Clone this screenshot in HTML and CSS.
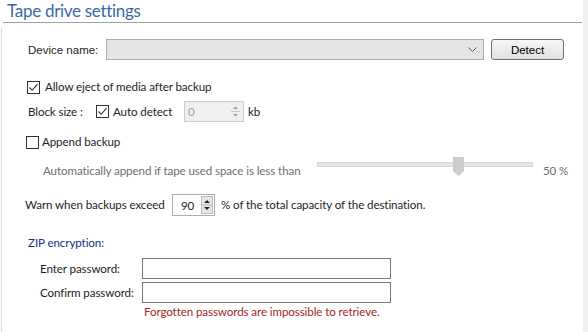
FILE: index.html
```html
<!DOCTYPE html>
<html>
<head>
<meta charset="utf-8">
<link rel="stylesheet" href="styles.css">
</head>
<body>
<div class="page">
  <div class="main">
    <div class="header"><span class="title">Tape drive settings</span></div>
    <div class="panel">
      <div class="row device-row">
        <span class="label-ms device-label">Device name:</span>
        <div class="combo">
          <svg class="chev" width="9" height="6" viewBox="0 0 9 6"><path d="M0.5 0.5 L4.5 4.5 L8.5 0.5" fill="none" stroke="#555" stroke-width="1"/></svg>
        </div>
        <div class="btn">Detect</div>
      </div>

      <div class="row eject-row">
        <span class="cb checked"><svg width="11" height="11" viewBox="0 0 11 11"><path d="M1.5 5.5 L4.2 8.3 L9.5 2.2" fill="none" stroke="#333" stroke-width="1.1"/></svg></span>
        <span class="txt">Allow eject of media after backup</span>
      </div>

      <div class="row block-row">
        <span class="txt block-label">Block size :</span>
        <span class="cb checked"><svg width="11" height="11" viewBox="0 0 11 11"><path d="M1.5 5.5 L4.2 8.3 L9.5 2.2" fill="none" stroke="#333" stroke-width="1.1"/></svg></span>
        <span class="txt auto-label">Auto detect</span>
        <div class="spin spin-disabled">
          <span class="spin-val">0</span>
          <span class="spin-btns">
            <svg width="11" height="17" viewBox="0 0 11 17"><path d="M3 6 L5.5 3.5 L8 6 Z" fill="#9a9a9a"/><line x1="1" y1="8.5" x2="10" y2="8.5" stroke="#c8c8c8"/><path d="M3 11 L5.5 13.5 L8 11 Z" fill="#9a9a9a"/></svg>
          </span>
        </div>
        <span class="txt kb">kb</span>
      </div>

      <div class="row append-row">
        <span class="cb"></span>
        <span class="txt">Append backup</span>
      </div>

      <div class="row auto-row">
        <span class="txt gray auto-text">Automatically append if tape used space is less than</span>
        <div class="slider">
          <div class="track"></div>
          <svg class="thumb" width="11" height="19" viewBox="0 0 11 19"><path d="M0 0 H11 V14 L5.5 19 L0 14 Z" fill="#cccccc"/></svg>
        </div>
        <span class="txt gray pct">50 %</span>
      </div>

      <div class="row warn-row">
        <span class="txt warn-label">Warn when backups exceed</span>
        <div class="spin spin-warn">
          <span class="spin-val">90</span>
          <span class="spin-btns">
            <svg width="12" height="18" viewBox="0 0 12 18"><rect x="0.5" y="0.5" width="11" height="17" fill="#e6e6e6" stroke="#bdbdbd"/><path d="M3 7 L6 4 L9 7 Z" fill="#222"/><line x1="1" y1="9" x2="11" y2="9" stroke="#bdbdbd"/><path d="M3 11 L6 14 L9 11 Z" fill="#222"/></svg>
          </span>
        </div>
        <span class="txt">% of the total capacity of the destination.</span>
      </div>

      <div class="row zip-row"><span class="txt navy">ZIP encryption:</span></div>

      <div class="row pwd-row">
        <span class="txt pwd-label">Enter password:</span>
        <div class="input"></div>
      </div>
      <div class="row pwd-row pwd2">
        <span class="txt pwd-label">Confirm password:</span>
        <div class="input"></div>
      </div>
      <div class="row warn-msg"><span class="txt red">Forgotten passwords are impossible to retrieve.</span></div>
    </div>
  </div>
  <div class="strip"></div>
</div>
</body>
</html>
```

FILE: styles.css
```css
html, body {
  margin: 0;
  padding: 0;
  background: #ffffff;
}
body {
  width: 588px;
  height: 332px;
  overflow: hidden;
  font-family: Lato, "Noto Sans", sans-serif;
  font-size: 11.6px;
  letter-spacing: -0.1px;
  color: #1e1e1e;
}
.page {
  display: flex;
  height: 332px;
}
.main {
  width: 583px;
  display: flex;
  flex-direction: column;
}
.strip {
  width: 5px;
  background: #f0f0f0;
}
.header {
  height: 23px;
  margin: 0 1px 0 3px;
  border-bottom: 1px solid #a0a0a0;
  box-sizing: border-box;
  padding-left: 4px;
  display: flex;
  align-items: flex-end;
}
.title {
  font-family: Lato, "Noto Sans", sans-serif;
  font-size: 17px;
  letter-spacing: -0.3px;
  color: #3b6aa8;
  line-height: 22px;
}
.panel {
  flex: 1;
  margin-top: 5px;
  margin-left: 1px;
  border-left: 1px solid #dcdcdc;
  display: flex;
  flex-direction: column;
}
.row {
  display: flex;
  align-items: center;
  white-space: nowrap;
}
.txt {
  line-height: 16px;
}
.label-ms {
  font-family: "Liberation Sans", Arial, sans-serif;
  font-size: 11.5px;
  letter-spacing: 0;
}
.device-row {
  margin-top: 11px;
  height: 21px;
  padding-left: 26px;
}
.device-label { width: 78px; }
.combo {
  width: 376px;
  height: 19px;
  border: 1px solid #adadad;
  background: #e5e5e5;
  display: flex;
  align-items: center;
  justify-content: flex-end;
}
.chev {
  margin-right: 6px;
}
.btn {
  margin-left: 7px;
  width: 71px;
  height: 19px;
  border: 1px solid #707070;
  border-radius: 3px;
  background: linear-gradient(#f6f6f6, #e2e2e2);
  display: flex;
  align-items: center;
  justify-content: center;
  font-family: "Liberation Sans", Arial, sans-serif;
  font-size: 11.5px;
  letter-spacing: 0;
  color: #000;
}
.cb {
  width: 11px;
  height: 11px;
  border: 1px solid #333333;
  background: #fff;
  display: inline-flex;
  flex: none;
}
.eject-row {
  margin-top: 19px;
  height: 16px;
  padding-left: 25px;
}
.eject-row .txt { margin-left: 5px; }
.block-row {
  margin-top: 6px;
  height: 21px;
  padding-left: 26px;
}
.block-label { width: 68px; }
.auto-label { margin-left: 4px; width: 71px; }
.spin {
  display: flex;
  align-items: center;
  box-sizing: border-box;
}
.spin-disabled {
  width: 60px;
  height: 21px;
  border: 1px solid #cccccc;
  background: #f0f0f0;
  color: #a0a0a0;
  padding-left: 3px;
}
.spin-disabled .spin-val { flex: 1; }
.spin-btns { display: flex; margin-right: 2px; }
.kb { margin-left: 4px; }
.append-row {
  margin-top: 12px;
  height: 16px;
  padding-left: 24px;
}
.append-row .txt { margin-left: 3px; }
.auto-row {
  margin-top: 7px;
  height: 21px;
  padding-left: 41px;
  align-items: flex-start;
}
.auto-text {
  width: 274px;
  margin-top: 6px;
}
.gray { color: #6d6d6d; }
.slider {
  position: relative;
  width: 216px;
  height: 21px;
}
.track {
  box-sizing: border-box;
  width: 100%;
  height: 5px;
  margin-top: 5px;
  background: #e6e6e6;
  border: 1px solid #d6d6d6;
}
.thumb {
  position: absolute;
  left: 136px;
  top: 0;
}
.pct { margin-left: 10px; margin-top: 6px; }
.warn-row {
  margin-top: 16px;
  height: 22px;
  padding-left: 23px;
}
.warn-label { width: 147px; }
.spin-warn {
  width: 43px;
  height: 22px;
  border: 1px solid #abadb3;
  background: #fff;
  padding-left: 8px;
}
.spin-warn .spin-val { flex: 1; }
.spin-warn .spin-btns { margin-right: 1px; }
.spin-warn + .txt { margin-left: 6px; }
.zip-row {
  margin-top: 19px;
  height: 16px;
  padding-left: 26px;
}
.navy { color: #1c2c86; }
.pwd-row {
  margin-top: 7px;
  height: 21px;
  padding-left: 38px;
}
.pwd2 { margin-top: 3px; }
.pwd-label { width: 102px; }
.input {
  width: 247px;
  height: 19px;
  border: 1px solid #7a7a7a;
  background: #fff;
}
.warn-msg {
  margin-top: 1px;
  height: 16px;
  padding-left: 142px;
}
.red { color: #a3262a; }
```
